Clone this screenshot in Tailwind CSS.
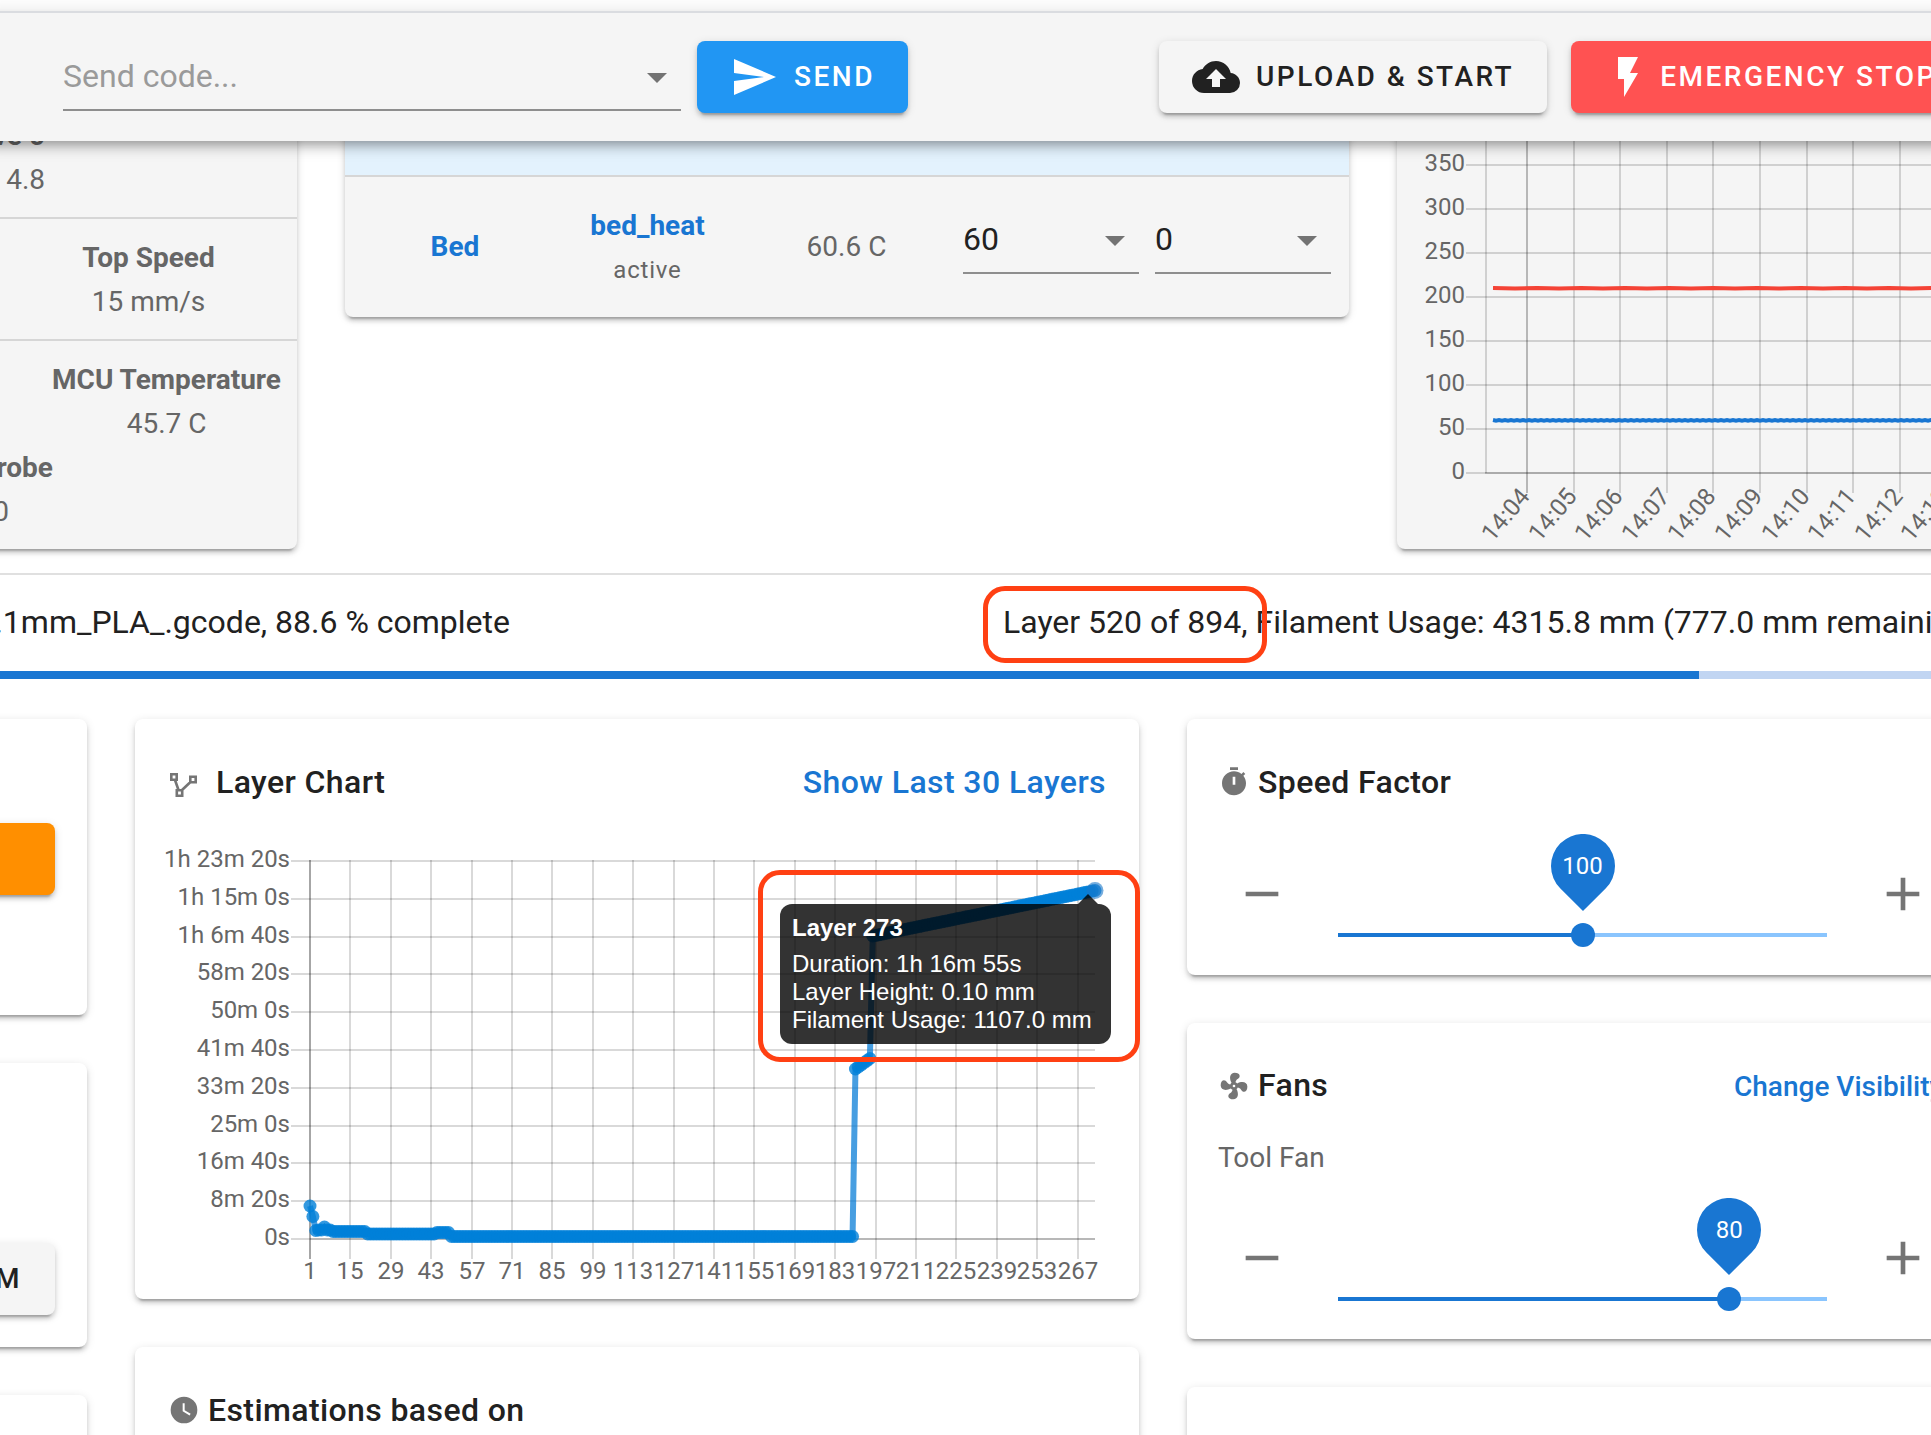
<!DOCTYPE html>
<html lang="en">
<head>
<meta charset="utf-8">
<title>Printer Dashboard</title>
<script src="https://cdn.jsdelivr.net/npm/@tailwindcss/browser@4"></script>
</head>
<body class="h-screen overflow-hidden bg-white font-[Roboto,sans-serif] text-[28px] leading-[44px] text-[#666]">

<!-- Top bar -->
<header class="relative z-10 -mx-4 mt-[11px] flex h-[130px] items-center border-t-2 border-[#dadce0] bg-[#f5f5f5] pr-4 pl-[79px] shadow-[0_4px_8px_-2px_rgba(0,0,0,0.2),0_8px_10px_0_rgba(0,0,0,0.14),0_2px_20px_0_rgba(0,0,0,0.12)]">
  <div class="relative w-[618px] shrink-0">
    <input type="text" aria-label="Send code" placeholder="Send code..." class="block h-[68px] w-full border-b-2 border-[#8e8e8e] bg-transparent text-[32px] text-[#212121] outline-none placeholder:text-[#9a9a9a]">
    <svg class="pointer-events-none absolute top-[30px] right-[14px] h-[10px] w-5" viewBox="0 0 20 10" fill="#737373"><path d="M0 0h20L10 10z"/></svg>
  </div>
  <button type="button" class="ml-4 flex h-18 shrink-0 items-center gap-4 rounded-lg bg-[#2196f3] px-[33px] text-[28px] font-medium tracking-[2.5px] text-white shadow-[0_6px_2px_-4px_rgba(0,0,0,0.2),0_4px_4px_0_rgba(0,0,0,0.14),0_2px_10px_0_rgba(0,0,0,0.12)]">
    <svg class="size-12" viewBox="0 0 24 24" fill="currentColor"><path d="M2,21L23,12L2,3V10L17,12L2,14V21Z"/></svg>SEND
  </button>
  <div class="ml-auto flex w-[772px] shrink-0 gap-6">
    <button type="button" class="flex h-18 shrink-0 items-center gap-4 rounded-lg bg-[#f5f5f5] px-[33px] text-[28px] font-medium tracking-[2.5px] text-[#212121] shadow-[0_6px_2px_-4px_rgba(0,0,0,0.2),0_4px_4px_0_rgba(0,0,0,0.14),0_2px_10px_0_rgba(0,0,0,0.12)]">
      <svg class="size-12" viewBox="0 0 24 24" fill="currentColor"><path d="M14,13V17H10V13H7L12,8L17,13M19.35,10.03C18.67,6.59 15.64,4 12,4C9.11,4 6.6,5.64 5.35,8.03C2.34,8.36 0,10.9 0,14A6,6 0 0,0 6,20H19A5,5 0 0,0 24,15C24,12.36 21.95,10.22 19.35,10.03Z"/></svg>UPLOAD &amp; START
    </button>
    <button type="button" class="flex h-18 shrink-0 items-center gap-2 rounded-lg bg-[#ff5252] px-[33px] text-[28px] font-medium tracking-[2.5px] whitespace-nowrap text-white shadow-[0_6px_2px_-4px_rgba(0,0,0,0.2),0_4px_4px_0_rgba(0,0,0,0.14),0_2px_10px_0_rgba(0,0,0,0.12)]">
      <svg class="size-12" viewBox="0 0 24 24" fill="currentColor"><path d="M7,2V13H10V22L17,10H13L17,2H7Z"/></svg>EMERGENCY STOP
    </button>
  </div>
</header>

<!-- Machine status -->
<section class="-mt-7 grid h-[460px] grid-cols-[297px_1004px_1fr] items-start gap-12">
  <div class="-ml-4 rounded-r-lg bg-[#f5f5f5] pl-4 shadow-[0_6px_2px_-4px_rgba(0,0,0,0.2),0_4px_4px_0_rgba(0,0,0,0.14),0_2px_10px_0_rgba(0,0,0,0.12)]">
    <div class="border-b-2 border-[#d6d6d6] pt-[1px] pb-[15px]">
      <div class="flex w-[45px] justify-end font-bold whitespace-nowrap">Drive 0</div>
      <div class="flex w-[45px] justify-end">4.8</div>
    </div>
    <div class="border-b-2 border-[#d6d6d6] pt-[17px] pb-[15px] text-center">
      <div class="font-bold">Top Speed</div>
      <div>15 mm/s</div>
    </div>
    <div class="pt-[17px] pb-[15px]">
      <div class="flex justify-end pr-4">
        <div class="text-center">
          <div class="font-bold">MCU Temperature</div>
          <div>45.7 C</div>
        </div>
      </div>
      <div class="flex w-[53px] justify-end font-bold whitespace-nowrap">Z-Probe</div>
      <div class="flex w-[9px] justify-end">0</div>
    </div>
  </div>

  <div class="rounded-lg bg-[#f5f5f5] shadow-[0_6px_2px_-4px_rgba(0,0,0,0.2),0_4px_4px_0_rgba(0,0,0,0.14),0_2px_10px_0_rgba(0,0,0,0.12)]">
    <table class="w-full table-fixed text-center">
      <colgroup><col class="w-[220px]"><col class="w-[165px]"><col><col class="w-[192px]"><col class="w-[194px]"></colgroup>
      <tbody>
        <tr class="h-[63px] border-b-2 border-[#d6d6d6] bg-[#e3f2fd]"><td colspan="5"></td></tr>
        <tr class="h-[141px]">
          <td><a href="#" class="font-bold text-[#1976d2]">Bed</a></td>
          <td class="pt-[2px]">
            <a href="#" class="block font-bold text-[#1976d2]">bed_heat</a>
            <span class="block text-2xl leading-[44px] tracking-[0.8px]">active</span>
          </td>
          <td>60.6 C</td>
          <td class="pr-4 pb-[14px]">
            <div class="relative">
              <select aria-label="Active temperature" class="block h-[68px] w-full appearance-none border-b-2 border-[#8e8e8e] bg-transparent text-[32px] text-[#212121]"><option>60</option></select>
              <svg class="pointer-events-none absolute top-[30px] right-[14px] h-[10px] w-5" viewBox="0 0 20 10" fill="#737373"><path d="M0 0h20L10 10z"/></svg>
            </div>
          </td>
          <td class="pr-[18px] pb-[14px]">
            <div class="relative">
              <select aria-label="Standby temperature" class="block h-[68px] w-full appearance-none border-b-2 border-[#8e8e8e] bg-transparent text-[32px] text-[#212121]"><option>0</option></select>
              <svg class="pointer-events-none absolute top-[30px] right-[14px] h-[10px] w-5" viewBox="0 0 20 10" fill="#737373"><path d="M0 0h20L10 10z"/></svg>
            </div>
          </td>
        </tr>
      </tbody>
    </table>
  </div>

  <div class="-mr-4 rounded-l-lg bg-[#f5f5f5] shadow-[0_6px_2px_-4px_rgba(0,0,0,0.2),0_4px_4px_0_rgba(0,0,0,0.14),0_2px_10px_0_rgba(0,0,0,0.12)]">
    <svg id="temps" class="block h-[436px] w-full text-2xl" fill="#666"></svg>
  </div>
</section>

<!-- Job progress -->
<section class="border-t-2 border-[#e0e0e0] text-[32px] leading-[48px] text-[#212121]">
  <div class="flex h-24 items-center pb-[2px] whitespace-nowrap">
    <div class="flex w-[510px] shrink-0 justify-end">0.1mm_PLA_.gcode, 88.6 % complete</div>
    <div class="ml-auto w-[928px] shrink-0">
      <span class="relative inline-block">Layer 520 of 894,<span class="absolute -top-3 -left-5 h-[77px] w-[284px] rounded-[22px] border-5 border-[#ff4013]"></span></span>
      Filament Usage: 4315.8 mm (777.0 mm remaining)
    </div>
  </div>
  <div role="progressbar" aria-label="Job progress" class="h-2 bg-[#c1d5f2]"><div class="h-full w-[88%] bg-[#1976d2]"></div></div>
</section>

<main class="grid grid-cols-[87px_1004px_1fr] gap-12 pt-10">
  <!-- Job control -->
  <div class="-ml-4 flex flex-col gap-12">
    <div class="h-[296px] rounded-r-lg bg-white pt-26 pr-8 shadow-[0_6px_2px_-4px_rgba(0,0,0,0.2),0_4px_4px_0_rgba(0,0,0,0.14),0_2px_10px_0_rgba(0,0,0,0.12)]">
      <button type="button" aria-label="Pause print" class="block h-18 w-full rounded-r-lg bg-[#ff8f00] shadow-[0_6px_2px_-4px_rgba(0,0,0,0.2),0_4px_4px_0_rgba(0,0,0,0.14),0_2px_10px_0_rgba(0,0,0,0.12)]"></button>
    </div>
    <div class="h-[284px] rounded-r-lg bg-white pt-45 pr-8 shadow-[0_6px_2px_-4px_rgba(0,0,0,0.2),0_4px_4px_0_rgba(0,0,0,0.14),0_2px_10px_0_rgba(0,0,0,0.12)]">
      <button type="button" class="flex h-18 w-full items-center justify-end rounded-r-lg bg-[#f5f5f5] pr-[33px] text-[28px] font-medium tracking-[2.5px] text-[#212121] shadow-[0_6px_2px_-4px_rgba(0,0,0,0.2),0_4px_4px_0_rgba(0,0,0,0.14),0_2px_10px_0_rgba(0,0,0,0.12)]">M</button>
    </div>
    <div class="h-40 rounded-r-lg bg-white shadow-[0_6px_2px_-4px_rgba(0,0,0,0.2),0_4px_4px_0_rgba(0,0,0,0.14),0_2px_10px_0_rgba(0,0,0,0.12)]"></div>
  </div>

  <!-- Layer chart -->
  <div class="flex flex-col gap-12">
    <div class="relative rounded-lg bg-white pt-8 shadow-[0_6px_2px_-4px_rgba(0,0,0,0.2),0_4px_4px_0_rgba(0,0,0,0.14),0_2px_10px_0_rgba(0,0,0,0.12)]">
      <div class="flex h-[62px] items-center px-[33px] text-[32px] font-medium">
        <svg class="mr-4 size-8" viewBox="0 0 32 32" fill="none" stroke="#757575" stroke-width="2.6"><path d="M3.3 8.3h5.4v5.4H3.3zM22.3 10.8h5.4v5.4h-5.4zM8.8 24.3h5.4v5.4H8.8zM7 14l3.500 10M22.500 16L13.500 24.500"/></svg>
        <h2 class="tracking-[0.4px] text-[#212121]">Layer Chart</h2>
        <a href="#" class="ml-auto tracking-[0.4px] text-[#1976d2]">Show Last 30 Layers</a>
      </div>
      <svg id="layers" class="block h-[486px] w-full text-2xl" fill="#666"></svg>
      <div class="absolute top-[185px] left-[645px] w-[331px] rounded-xl bg-black/80 px-3 pt-[10px] pb-[6px] font-['Liberation_Sans',sans-serif] text-2xl leading-7 whitespace-nowrap text-white">
        <svg class="absolute -top-[10px] right-[13px] h-[10px] w-5" viewBox="0 0 20 10" fill="#000" fill-opacity="0.8"><path d="M0 10h20L10 0z"/></svg>
        <div class="pb-2 font-bold">Layer 273</div>
        <div>Duration: 1h 16m 55s</div>
        <div>Layer Height: 0.10 mm</div>
        <div class="pb-1">Filament Usage: 1107.0 mm</div>
      </div>
      <div class="absolute top-[151px] left-[623px] h-48 w-[382px] rounded-[22px] border-5 border-[#ff4013]"></div>
    </div>
    <div class="h-52 rounded-lg bg-white pt-8 shadow-[0_6px_2px_-4px_rgba(0,0,0,0.2),0_4px_4px_0_rgba(0,0,0,0.14),0_2px_10px_0_rgba(0,0,0,0.12)]">
      <div class="flex h-[62px] items-center gap-2 px-[33px]">
        <svg class="size-8" viewBox="0 0 24 24" fill="#757575"><path d="M12,2A10,10 0 0,0 2,12A10,10 0 0,0 12,22A10,10 0 0,0 22,12A10,10 0 0,0 12,2M16.200,16.200L11,13V7H12.500V12.200L17,14.900L16.200,16.200Z"/></svg>
        <h2 class="text-[32px] font-medium tracking-[0.4px] text-[#212121]">Estimations based on</h2>
      </div>
    </div>
  </div>

  <!-- Sliders -->
  <div class="-mr-4 flex flex-col gap-12">
    <div class="rounded-l-lg bg-white pt-8 pr-4 pb-7 pl-[31px] shadow-[0_6px_2px_-4px_rgba(0,0,0,0.2),0_4px_4px_0_rgba(0,0,0,0.14),0_2px_10px_0_rgba(0,0,0,0.12)]">
      <div class="flex h-[62px] items-center gap-2">
        <svg class="size-8" viewBox="0 0 24 24" fill="#757575"><path fill-rule="evenodd" d="M15,1H9V3H15V1M11,14H13V8H11V14M19.030,7.390L20.450,5.970C20,5.460 19.550,5 19.040,4.560L17.620,6C16.070,4.740 14.120,4 12,4A9,9 0 0,0 3,13A9,9 0 0,0 12,22C17,22 21,17.970 21,13C21,10.880 20.260,8.930 19.030,7.390Z"/></svg>
        <h2 class="text-[32px] font-medium tracking-[0.4px] text-[#212121]">Speed Factor</h2>
      </div>
      <div class="mt-[53px] flex items-start gap-12 pl-4">
        <button type="button" aria-label="Decrease speed"><svg class="size-14" viewBox="0 0 24 24" fill="#757575"><path d="M19,13H5V11H19V13Z"/></svg></button>
        <div class="relative mt-[57px] h-6 flex-1">
          <div class="absolute inset-x-0 top-[10px] h-1 bg-[#8ac5fe]"><div class="h-full bg-[#1976d2]" style="width:50%"></div></div>
          <input type="range" min="0" max="200" value="100" aria-label="Speed factor" class="absolute top-0 -left-3 h-6 w-[calc(100%+24px)] appearance-none bg-transparent [&::-webkit-slider-thumb]:size-6 [&::-webkit-slider-thumb]:appearance-none [&::-webkit-slider-thumb]:rounded-full [&::-webkit-slider-thumb]:bg-[#1976d2]">
          <div class="absolute bottom-9 -ml-8 h-[77px] w-16" style="left:50%">
            <svg class="absolute inset-0" width="64" height="77" viewBox="0 0 64 77" fill="#1976d2"><path d="M32 77L9.400 54.600A32 32 0 1 1 54.600 54.600Z"/></svg>
            <div class="relative text-center text-2xl leading-[64px] text-white">100</div>
          </div>
        </div>
        <button type="button" aria-label="Increase speed"><svg class="size-14" viewBox="0 0 24 24" fill="#757575"><path d="M19,13H13V19H11V13H5V11H11V5H13V11H19V13Z"/></svg></button>
      </div>
    </div>

    <div class="rounded-l-lg bg-white pt-8 pr-4 pb-7 pl-[31px] shadow-[0_6px_2px_-4px_rgba(0,0,0,0.2),0_4px_4px_0_rgba(0,0,0,0.14),0_2px_10px_0_rgba(0,0,0,0.12)]">
      <div class="flex h-[62px] items-center gap-2 whitespace-nowrap">
        <svg class="size-8 shrink-0" viewBox="0 0 24 24" fill="#757575"><path fill-rule="evenodd" d="M12,11A1,1 0 0,0 11,12A1,1 0 0,0 12,13A1,1 0 0,0 13,12A1,1 0 0,0 12,11M12.500,2C17,2 17.110,5.570 14.750,6.750C13.760,7.240 13.320,8.290 13.130,9.220C13.610,9.420 14.030,9.730 14.350,10.130C18.050,8.130 22.030,8.920 22.030,12.500C22.030,17 18.460,17.100 17.280,14.730C16.780,13.740 15.720,13.300 14.790,13.110C14.590,13.590 14.280,14 13.880,14.340C15.870,18.030 15.080,22 11.500,22C7,22 6.910,18.420 9.270,17.240C10.250,16.750 10.690,15.710 10.890,14.790C10.400,14.590 9.970,14.270 9.650,13.870C5.960,15.850 2,15.070 2,11.500C2,7 5.560,6.890 6.740,9.260C7.240,10.250 8.290,10.680 9.220,10.870C9.410,10.390 9.730,9.970 10.140,9.650C8.150,5.960 8.940,2 12.500,2Z"/></svg>
        <div class="flex flex-1 items-baseline justify-between">
          <h2 class="text-[32px] font-medium tracking-[0.4px] text-[#212121]">Fans</h2>
          <div class="w-[197px]"><a href="#" class="font-medium text-[#1976d2]">Change Visibility</a></div>
        </div>
      </div>
      <div class="mt-[21px] h-10 leading-10">Tool Fan</div>
      <div class="mt-[52px] flex items-start gap-12 pl-4">
        <button type="button" aria-label="Decrease fan"><svg class="size-14" viewBox="0 0 24 24" fill="#757575"><path d="M19,13H5V11H19V13Z"/></svg></button>
        <div class="relative mt-[57px] h-6 flex-1">
          <div class="absolute inset-x-0 top-[10px] h-1 bg-[#8ac5fe]"><div class="h-full bg-[#1976d2]" style="width:80%"></div></div>
          <input type="range" min="0" max="100" value="80" aria-label="Tool fan" class="absolute top-0 -left-3 h-6 w-[calc(100%+24px)] appearance-none bg-transparent [&::-webkit-slider-thumb]:size-6 [&::-webkit-slider-thumb]:appearance-none [&::-webkit-slider-thumb]:rounded-full [&::-webkit-slider-thumb]:bg-[#1976d2]">
          <div class="absolute bottom-9 -ml-8 h-[77px] w-16" style="left:80%">
            <svg class="absolute inset-0" width="64" height="77" viewBox="0 0 64 77" fill="#1976d2"><path d="M32 77L9.400 54.600A32 32 0 1 1 54.600 54.600Z"/></svg>
            <div class="relative text-center text-2xl leading-[64px] text-white">80</div>
          </div>
        </div>
        <button type="button" aria-label="Increase fan"><svg class="size-14" viewBox="0 0 24 24" fill="#757575"><path d="M19,13H13V19H11V13H5V11H11V5H13V11H19V13Z"/></svg></button>
      </div>
    </div>

    <div class="h-40 rounded-l-lg bg-white shadow-[0_6px_2px_-4px_rgba(0,0,0,0.2),0_4px_4px_0_rgba(0,0,0,0.14),0_2px_10px_0_rgba(0,0,0,0.12)]"></div>
  </div>
</main>

<script>
  const line = (x1, y1, x2, y2, o) =>
    `<line x1="${x1}" y1="${y1}" x2="${x2}" y2="${y2}" stroke="#000" stroke-opacity="${o}" stroke-width="2"/>`;
  const label = (x, y, text, anchor, extra = '') =>
    `<text x="${x}" y="${y}" text-anchor="${anchor}" ${extra}>${text}</text>`;

  // Temperature chart: 44px per 50 degrees, one column per minute
  let t = '';
  for (let v = 0; v <= 400; v += 50) {
    const y = 360 - v / 50 * 44;
    t += line(69, y, v ? 640 : 88, y, 0.15) + (v ? '' : line(88, y, 640, y, 0.3));
    t += label(68, y + 6, v, 'end');
  }
  t += line(89, 0, 89, 360, 0.15);
  for (let i = 0; i < 11; i++) {
    const x = Math.round(130 + i * 46.6);
    t += line(x, 0, x, 380, i ? 0.15 : 0.25);
    t += label(x + 4, 384, '14:' + String(4 + i).padStart(2, '0'), 'end', `transform="rotate(-50 ${x + 4} 384)"`);
  }
  const wave = (y, step, amp) => {
    let d = '';
    for (let x = 96, i = 0; x < 640; x += step, i++) d += (i ? 'L' : 'M') + x + ' ' + (y + (i % 2 ? amp : 0));
    return d;
  };
  t += `<path d="${wave(175, 22, 0.6)}" fill="none" stroke="#f44336" stroke-width="4"/>`;
  t += `<path d="${wave(307, 3, 0.6)}" fill="none" stroke="#1976d2" stroke-width="4"/>`;
  document.getElementById('temps').innerHTML = t;

  // Layer chart: durations against layer numbers 1 to 273
  const names = ['0s', '8m 20s', '16m 40s', '25m 0s', '33m 20s', '41m 40s', '50m 0s', '58m 20s', '1h 6m 40s', '1h 15m 0s', '1h 23m 20s'];
  let l = '';
  names.forEach((n, i) => {
    const y = Math.round(426 - i * 37.8);
    l += line(156, y, 960, y, 0.15) + (i ? '' : line(175, y, 960, y, 0.15)) + label(155, y + 6, n, 'end');
  });
  const px = n => 175 + (n - 1) * 2.886;
  for (let n = 1; n <= 267; n += 14) {
    const x = Math.round(px(n));
    l += line(x, 47, x, 446, n === 1 ? 0.35 : 0.15) + label(x, 466, n, 'middle');
  }
  const pts = [[1, 393], [2, 403.500], [3, 417.500]];
  for (let n = 4; n <= 189; n++) {
    let y = 423.500;
    if (n < 50) y = n < 45 ? 421 : 419.500;
    if (n < 21) y = n < 9 ? 417 : 418.500;
    if (n === 6) y = 414;
    pts.push([n, y]);
  }
  for (let n = 190; n <= 195; n++) pts.push([n, 256 - (n - 190) * 2.100]);
  for (let n = 196; n <= 273; n++) pts.push([n, 123 - (n - 196) * 45.500 / 77]);
  l += `<path d="${pts.map((p, i) => (i ? 'L' : 'M') + px(p[0]) + ' ' + p[1]).join('')}" fill="none" stroke="#0078d6" stroke-opacity="0.72" stroke-width="6"/>`;
  l += pts.map(p => `<circle cx="${px(p[0])}" cy="${p[1]}" r="6.500" fill="#0080d8" fill-opacity="0.8"/>`).join('');
  l += '<circle cx="960" cy="77.500" r="8.500" fill="#1976c8" fill-opacity="0.6"/>';
  document.getElementById('layers').innerHTML = l;
</script>
</body>
</html>
